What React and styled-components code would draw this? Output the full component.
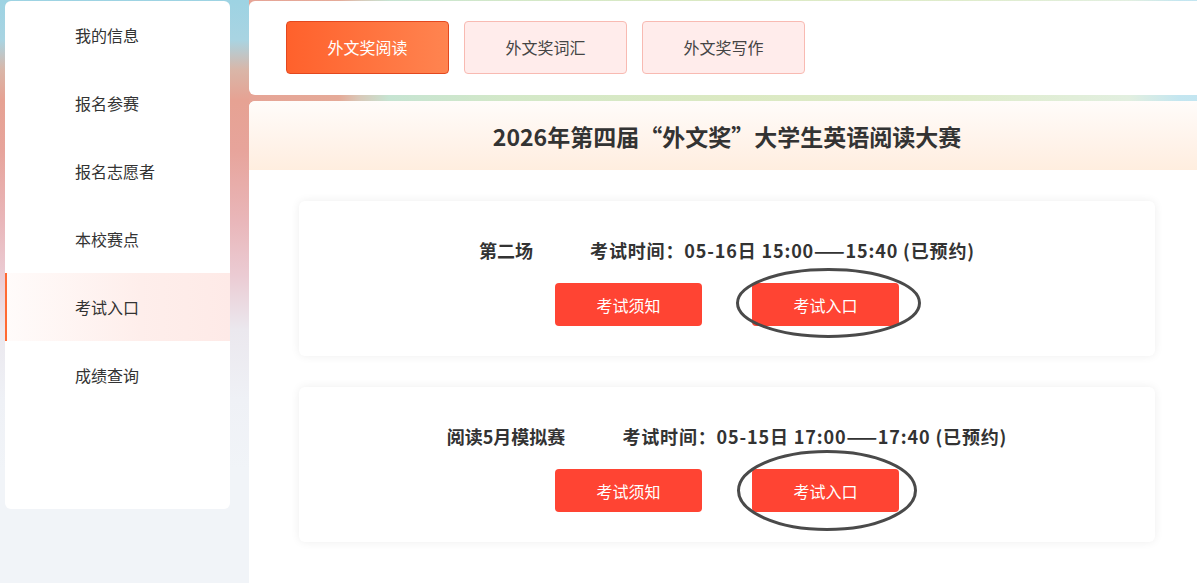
import React from 'react';
import styled, { createGlobalStyle } from 'styled-components';

const GlobalStyle = createGlobalStyle`
  html, body {
    margin: 0;
    padding: 0;
  }
  body {
    overflow-x: hidden;
    font-family: "Noto Sans CJK SC", "Noto Sans", sans-serif;
    color: #333;
    background: linear-gradient(180deg,
      #9dd3e3 0px, #a9d4e2 40px, #d9b6a8 70px, #e6a293 100px,
      #e7a49b 150px, #e9b6b9 220px, #ebcbd3 275px, #ebe8ee 330px,
      #eff1f6 400px, #f1f4f8 470px);
    min-height: 100vh;
  }
`;

const Layout = styled.div`
  display: grid;
  grid-template-columns: 225px 956px;
  column-gap: 19px;
  padding-left: 5px;
  min-height: 100vh;
`;

const Sidebar = styled.nav`
  margin-top: 1px;
  height: 508px;
  background: #fff;
  border-radius: 6px;
  overflow: hidden;
`;

const NavItem = styled.div`
  height: 68px;
  display: flex;
  align-items: center;
  padding-left: ${p => (p.$active ? '68px' : '70px')};
  padding-bottom: 1px;
  box-sizing: border-box;
  font-size: 16px;
  color: #333;
  border-left: ${p => (p.$active ? '2px solid #ff6a33' : 'none')};
  background: ${p => (p.$active ? 'linear-gradient(90deg, #fffbfa 0%, #feeeeb 60%, #feeae7 100%)' : 'transparent')};
  cursor: pointer;
`;

const Column = styled.div`
  display: flex;
  flex-direction: column;
  gap: 6px;
  padding-top: 1px;
  background: linear-gradient(90deg,
    #e6a496 0px, #e5aa98 90px, #d9c8b8 110px, #c6e4d2 140px,
    #d3e8c8 260px, #dbe9c2 480px, #dfeccc 720px, #e2efe0 880px,
    #c4e6f0 930px, #c2e5f1 956px);
`;

const TopPanel = styled.div`
  height: 94px;
  background: #fff;
  border-radius: 6px 0 0 6px;
  display: flex;
  align-items: flex-start;
  gap: 15px;
  padding: 20px 0 0 37px;
  box-sizing: border-box;
`;

const Tab = styled.button`
  width: 163px;
  height: 53px;
  padding: 0 0 2px;
  border-radius: 4px;
  font-family: inherit;
  font-size: 16px;
  cursor: pointer;
  border: 1px solid ${p => (p.$active ? '#e3481f' : '#f8bab2')};
  background: ${p => (p.$active ? 'linear-gradient(90deg, #ff612c 0%, #ff8450 100%)' : '#ffeceb')};
  color: ${p => (p.$active ? '#fff' : '#444')};
`;

const MainPanel = styled.div`
  flex: 1;
  min-height: 482px;
  background: #fff;
  border-radius: 6px 0 0 0;
  overflow: hidden;
`;

const Banner = styled.div`
  height: 69px;
  display: flex;
  align-items: center;
  justify-content: center;
  background: linear-gradient(180deg, #fffcfa 0%, #fff3ea 60%, #ffeedf 100%);
  font-size: 23px;
  font-weight: 700;
  color: #333;
`;

const CardList = styled.div`
  display: flex;
  flex-direction: column;
  gap: 31px;
  padding: 31px 50px 40px;
`;

const Card = styled.div`
  height: 155px;
  background: #fff;
  border-radius: 6px;
  box-shadow: 0 0 10px rgba(0, 0, 0, 0.07);
  display: flex;
  flex-direction: column;
  align-items: center;
  padding-top: 36px;
  box-sizing: border-box;
`;

const InfoLine = styled.div`
  display: flex;
  gap: 57px;
  font-size: 18px;
  font-weight: 700;
  line-height: 26px;
  color: #333;
  white-space: nowrap;
`;

const SessionTime = styled.span`
  letter-spacing: 0.85px;
`;

const Actions = styled.div`
  display: flex;
  gap: 50px;
  margin-top: 20px;
`;

const ActionButton = styled.button`
  width: 147px;
  height: 43px;
  border: none;
  border-radius: 4px;
  background: #ff4433;
  color: #fff;
  font-family: inherit;
  font-size: 16px;
  cursor: pointer;
`;

const Marked = styled.span`
  position: relative;
  display: inline-block;
`;

const Ring = styled.svg`
  position: absolute;
  pointer-events: none;
  overflow: visible;
`;

// hand-drawn ring around the entry button
const CircleMark = ({ left, right, top, bottom }) => {
  const w = 147 + left + right;
  const h = 43 + top + bottom;
  return (
    <Ring
      width={w}
      height={h}
      style={{ left: -left, top: -top }}
      viewBox={`0 0 ${w} ${h}`}
    >
      <ellipse
        cx={w / 2}
        cy={h / 2}
        rx={w / 2 - 1.5}
        ry={h / 2 - 1.5}
        fill="none"
        stroke="#4a4a4a"
        strokeWidth="3"
      />
    </Ring>
  );
};

const navItems = ['我的信息', '报名参赛', '报名志愿者', '本校赛点', '考试入口', '成绩查询'];
const tabs = ['外文奖阅读', '外文奖词汇', '外文奖写作'];

const sessions = [
  {
    name: '第二场',
    time: '考试时间：05-16日 15:00——15:40 (已预约)',
    ring: { left: 16, right: 22, top: 15, bottom: 12 },
  },
  {
    name: '阅读5月模拟赛',
    time: '考试时间：05-15日 17:00——17:40 (已预约)',
    ring: { left: 15, right: 18, top: 19, bottom: 19 },
  },
];

export default function App() {
  return (
    <>
      <GlobalStyle />
      <Layout>
        <Sidebar>
          {navItems.map(item => (
            <NavItem key={item} $active={item === '考试入口'}>{item}</NavItem>
          ))}
        </Sidebar>
        <Column>
          <TopPanel>
            {tabs.map((t, i) => (
              <Tab key={t} $active={i === 0}>{t}</Tab>
            ))}
          </TopPanel>
          <MainPanel>
            <Banner>2026年第四届“外文奖”大学生英语阅读大赛</Banner>
            <CardList>
              {sessions.map(s => (
                <Card key={s.name}>
                  <InfoLine>
                    <span>{s.name}</span>
                    <SessionTime>{s.time}</SessionTime>
                  </InfoLine>
                  <Actions>
                    <ActionButton>考试须知</ActionButton>
                    <Marked>
                      <ActionButton>考试入口</ActionButton>
                      <CircleMark {...s.ring} />
                    </Marked>
                  </Actions>
                </Card>
              ))}
            </CardList>
          </MainPanel>
        </Column>
      </Layout>
    </>
  );
}
